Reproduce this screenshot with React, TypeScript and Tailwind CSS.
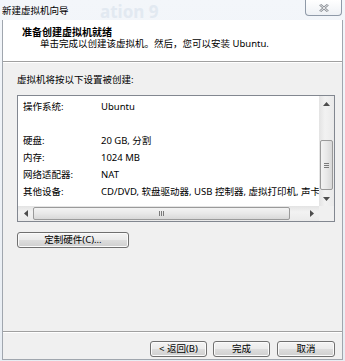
import React from "react";

const FONT = "font-[family-name:'Noto_Sans','Noto_Sans_CJK_SC',sans-serif]";

function Arrow({ dir }: { dir: "up" | "down" | "left" | "right" }) {
  const pts: Record<string, string> = {
    up: "0,4 3.5,0 7,4",
    down: "0,0 3.5,4 7,0",
    left: "4,0 0,3.5 4,7",
    right: "0,0 4,3.5 0,7",
  };
  const vertical = dir === "up" || dir === "down";
  return (
    <svg width={vertical ? 7 : 4} height={vertical ? 4 : 7} viewBox={vertical ? "0 0 7 4" : "0 0 4 7"}>
      <polygon points={pts[dir]} fill="#4d4d4d" />
    </svg>
  );
}

function WinButton({ children, className = "" }: { children: React.ReactNode; className?: string }) {
  return (
    <div
      className={`flex h-[16px] items-center justify-center rounded-[3px] border border-[#707070] bg-[linear-gradient(to_bottom,#f4f4f4_0%,#ebebeb_48%,#dddddd_52%,#cfcfcf_100%)] shadow-[inset_0_0_0_1px_#fbfbfb] text-[9.5px] leading-[12px] text-black ${className}`}
    >
      {children}
    </div>
  );
}

export default function App() {
  const rows: [string, string][] = [
    ["操作系统:", "Ubuntu"],
    ["", ""],
    ["硬盘:", "20 GB, 分割"],
    ["内存:", "1024 MB"],
    ["网络适配器:", "NAT"],
    ["其他设备:", "CD/DVD, 软盘驱动器, USB 控制器, 虚拟打印机, 声卡, 显示器"],
  ];

  return (
    <div className={`relative flex h-[361px] w-[345px] flex-col overflow-hidden bg-[linear-gradient(to_bottom,#f3f6fa,#e8edf3)] ${FONT}`}>
      {/* faint background text seen through the glass frame */}
      <div className="pointer-events-none absolute left-[100px] top-[2px] text-[17px] font-bold leading-[20px] text-[#e2e9f1]">
        ation 9
      </div>

      {/* title bar */}
      <div className="relative flex h-[20px] items-start justify-between">
        <div className="pl-[2px] pt-[4px] text-[9.5px] leading-[13px] text-black">新建虚拟机向导</div>
        <div className="mr-[3px] flex h-[16px] w-[37px] items-center justify-center rounded-b-[4px] border border-t-0 border-[#8f9aa8] bg-[linear-gradient(to_bottom,#ffffff,#eef1f5)]">
          <svg width="10" height="8" viewBox="0 0 10 8">
            <path d="M1 0.5 L9 7.5 M9 0.5 L1 7.5" stroke="#8a8f96" strokeWidth="2.4" />
            <path d="M1 0.5 L9 7.5 M9 0.5 L1 7.5" stroke="#f4f4f4" strokeWidth="0.9" />
          </svg>
        </div>
      </div>

      {/* dialog body */}
      <div className="relative ml-[2px] flex h-[340px] w-[341px] flex-col border-x border-b border-[#a0a6ae] bg-[#f0f0f0]">
        {/* header */}
        <div className="h-[42px] border-b border-[#a0a0a0] bg-white pt-[7px]">
          <div className="pl-[19px] text-[10px] font-bold leading-[11px] text-black">准备创建虚拟机就绪</div>
          <div className="pl-[37px] text-[9.5px] leading-[11px] text-black">单击完成以创建该虚拟机。然后，您可以安装 Ubuntu.</div>
        </div>

        {/* main */}
        <div className="flex flex-1 flex-col border-t border-white pl-[14px] pt-[11px]">
          <div className="text-[9.5px] leading-[12px] text-black">虚拟机将按以下设置被创建:</div>

          <div className="mt-[9px] grid h-[127px] w-[318px] grid-cols-[1fr_15px] grid-rows-[1fr_15px] border border-[#828790] bg-white">
            <div className="overflow-hidden whitespace-nowrap pl-[5px] pt-[1.5px] text-[9.5px] leading-[17px] text-black">
              {rows.map(([k, v], i) => (
                <div key={i} className="flex h-[17px]">
                  <div className="w-[78px] shrink-0">{k}</div>
                  <div>{v}</div>
                </div>
              ))}
            </div>

            {/* vertical scrollbar */}
            <div className="flex flex-col bg-[linear-gradient(to_right,#e3e3e3,#f2f2f2_40%,#eaeaea)]">
              <div className="flex h-[15px] items-center justify-center">
                <Arrow dir="up" />
              </div>
              <div className="flex-1 pl-[1px] pr-[1px] pt-[29px]">
                <div className="flex h-[50px] flex-col items-center justify-center gap-[1px] rounded-[2px] border border-[#9a9a9a] bg-[linear-gradient(to_right,#f3f3f3,#e8e8e8_50%,#d8d8d8)]">
                  <div className="h-[1px] w-[5px] bg-[#7a7a7a]" />
                  <div className="h-[1px] w-[5px] bg-[#7a7a7a]" />
                  <div className="h-[1px] w-[5px] bg-[#7a7a7a]" />
                </div>
              </div>
              <div className="flex h-[15px] items-center justify-center">
                <Arrow dir="down" />
              </div>
            </div>

            {/* horizontal scrollbar */}
            <div className="flex bg-[linear-gradient(to_bottom,#e3e3e3,#f2f2f2_40%,#eaeaea)]">
              <div className="flex w-[15px] items-center justify-center">
                <Arrow dir="left" />
              </div>
              <div className="flex flex-1 py-[1px] pr-[14px]">
                <div className="flex flex-1 items-center justify-center gap-[1px] rounded-[2px] border border-[#9a9a9a] bg-[linear-gradient(to_bottom,#f3f3f3,#e8e8e8_50%,#d8d8d8)]">
                  <div className="h-[5px] w-[1px] bg-[#7a7a7a]" />
                  <div className="h-[5px] w-[1px] bg-[#7a7a7a]" />
                  <div className="h-[5px] w-[1px] bg-[#7a7a7a]" />
                </div>
              </div>
              <div className="flex w-[15px] items-center justify-center">
                <Arrow dir="right" />
              </div>
            </div>
            <div className="bg-[#f0f0f0]" />
          </div>

          <WinButton className="mt-[10px] w-[112px]">定制硬件(C)...</WinButton>
        </div>

        {/* bottom buttons */}
        <div className="h-[28px] border-t border-[#a0a0a0]">
          <div className="flex h-full justify-end border-t border-white pr-[7px] pt-[8px]">
            <WinButton className="w-[57px]">&lt; 返回(B)</WinButton>
            <WinButton className="ml-[6px] w-[57px]">完成</WinButton>
            <WinButton className="ml-[7px] w-[58px]">取消</WinButton>
          </div>
        </div>
      </div>
    </div>
  );
}
